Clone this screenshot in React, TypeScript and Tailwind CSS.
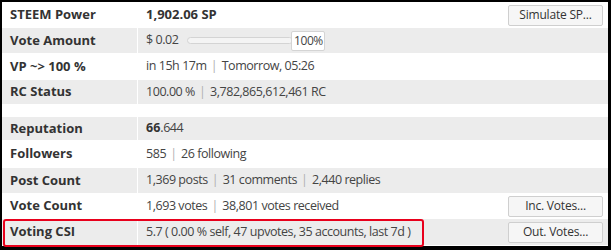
import React from "react";

const Sep = () => (
  <span className="inline-block w-[15px] shrink-0 text-center tracking-normal text-[#b0b0b0]">|</span>
);

function Btn({ children }: { children: React.ReactNode }) {
  return (
    <div className="h-[21px] w-[95px] flex items-center justify-center rounded-[2px] border border-[#cfcfcf] bg-[#f6f6f6] text-[12px] tracking-[-0.2px] text-[#333]">
      {children}
    </div>
  );
}

function Row({
  label,
  grey,
  h,
  children,
  right,
}: {
  label?: string;
  grey?: boolean;
  h: string;
  children?: React.ReactNode;
  right?: React.ReactNode;
}) {
  return (
    <div className={`flex ${h} ${grey ? "bg-[#ececec]" : "bg-white"}`}>
      <div className="w-[136px] shrink-0 flex items-center pl-[8px] font-bold text-[13px] text-[#333] border-r border-white">
        {label}
      </div>
      <div className="flex-1 flex items-center pl-[8px] pr-[5px] text-[12.5px] tracking-[-0.45px] text-[#444]">
        <div className="flex-1 flex items-center">{children}</div>
        {right}
      </div>
    </div>
  );
}

export default function App() {
  return (
    <div
      className="relative w-[611px] h-[250px] border-2 border-b-[4px] border-r-[3px] border-black bg-white"
      style={{ fontFamily: '"Open Sans", "Noto Sans", sans-serif' }}
    >
      <Row label="STEEM Power" h="h-[26px]" right={<Btn>Simulate SP...</Btn>}>
        <span className="font-bold text-[13px] tracking-normal text-[#333]">1,902.06 SP</span>
      </Row>
      <Row label="Vote Amount" grey h="h-[25px]">
        <span>$ 0.02</span>
        <div className="ml-[9px] h-[7px] w-[106px] rounded-full border border-[#d4d4d4] bg-[#f4f4f4]" />
        <div className="ml-[-2px] h-[20px] w-[34px] flex items-center justify-center rounded-[2px] border border-[#d4d4d4] bg-white text-[12px]">
          100%
        </div>
      </Row>
      <Row label="VP ~> 100 %" h="h-[27px]">
        <span>in 15h 17m</span>
        <Sep />
        <span>Tomorrow, 05:26</span>
      </Row>
      <Row label="RC Status" grey h="h-[24px]">
        <span>100.00 %</span>
        <Sep />
        <span>3,782,865,612,461 RC</span>
      </Row>
      <Row h="h-[13px]" />
      <Row label="Reputation" grey h="h-[23px]">
        <span>
          <span className="font-bold tracking-normal text-[#333]">66</span>.644
        </span>
      </Row>
      <Row label="Followers" h="h-[28px]">
        <span>585</span>
        <Sep />
        <span>26 following</span>
      </Row>
      <Row label="Post Count" grey h="h-[25px]">
        <span>1,369 posts</span>
        <Sep />
        <span>31 comments</span>
        <Sep />
        <span>2,440 replies</span>
      </Row>
      <Row label="Vote Count" h="h-[26px]" right={<Btn>Inc. Votes...</Btn>}>
        <span>1,693 votes</span>
        <Sep />
        <span>38,801 votes received</span>
      </Row>
      <Row label="Voting CSI" grey h="h-[26px]" right={<Btn>Out. Votes...</Btn>}>
        <span>5.7 ( 0.00 % self, 47 upvotes, 35 accounts, last 7d )</span>
      </Row>
      <div className="absolute left-[1px] top-[217px] w-[421px] h-[28px] rounded-[3px] border-2 border-[#e8001c] pointer-events-none" />
    </div>
  );
}
